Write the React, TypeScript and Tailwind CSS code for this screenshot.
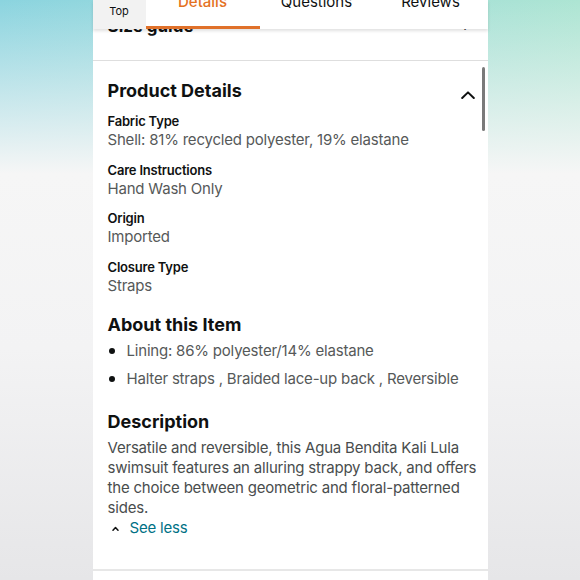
import React from "react";

const details = [
  { label: "Fabric Type", value: "Shell: 81% recycled polyester, 19% elastane" },
  { label: "Care Instructions", value: "Hand Wash Only" },
  { label: "Origin", value: "Imported" },
  { label: "Closure Type", value: "Straps" },
];

const bullets = [
  "Lining: 86% polyester/14% elastane",
  "Halter straps , Braided lace-up back , Reversible",
];

function ChevronUp({ className }: { className?: string }) {
  return (
    <svg viewBox="0 0 14 8" className={className} fill="none">
      <polyline points="1.2,7 7,1.4 12.8,7" stroke="#0f1111" strokeWidth="2" strokeLinecap="round" strokeLinejoin="round" />
    </svg>
  );
}

function App() {
  return (
    <div
      className="h-[580px] overflow-hidden flex justify-center bg-[linear-gradient(to_bottom,rgba(246,246,246,0)_0%,#f6f6f6_30%,#f3f3f4_60%,#e6e6e8_100%),linear-gradient(to_right,#8bd4df,#9fdcdb_50%,#ade5d3)]"
      style={{ fontFamily: "Inter, Roboto, Arial, sans-serif" }}
    >
      <div className="relative w-[395px] h-full bg-white">
        {/* sticky tab bar */}
        <div className="absolute top-0 left-0 right-0 z-10 h-[29px] flex bg-white shadow-[0_2px_3px_rgba(0,0,0,0.12)]">
          <div className="w-[53px] bg-[#f2f2f2] flex justify-center pt-[3px] text-[11px] text-[#0f1111]">Top</div>
          <div className="flex-1 relative flex justify-center">
            <span className="text-[15px] leading-none mt-[-6px] font-medium text-[#e4711e]">Details</span>
            <div className="absolute bottom-0 left-0 right-0 h-[3px] bg-[#e0712a]"></div>
          </div>
          <div className="flex-1 flex justify-center">
            <span className="text-[15px] leading-none mt-[-6px] text-[#0f1111]">Questions</span>
          </div>
          <div className="flex-1 flex justify-center">
            <span className="text-[15px] leading-none mt-[-6px] text-[#0f1111]">Reviews</span>
          </div>
        </div>

        {/* scrollbar */}
        <div className="absolute right-[3px] top-[67px] w-[3px] h-[64px] rounded-full bg-[#7a7a7a]"></div>

        {/* size guide row, mostly under the tab bar */}
        <div className="h-[61px] border-b border-[#dedede] px-[15px] pt-[15px] flex justify-between">
          <span className="text-[17px] leading-[22px] font-bold text-[#0f1111]">Size guide</span>
          <span className="text-[13px] leading-[22px] text-[#333] mr-[4px]">›</span>
        </div>

        <div className="pl-[15px] pr-[10px] tracking-[-0.2px]">
          <div className="flex justify-between items-center pt-[18px]">
            <h2 className="text-[18px] leading-[24px] font-bold tracking-normal text-[#0f1111]">Product Details</h2>
            <ChevronUp className="w-[14px] h-[8px] mr-[3px] mt-[8px]" />
          </div>

          <div className="mt-[10px]">
            {details.map((d, i) => (
              <div key={d.label} className={i > 0 ? "mt-[11.5px]" : ""}>
                <div className="text-[13px] leading-[17px] font-semibold text-[#0f1111]">{d.label}</div>
                <div className="text-[15px] leading-[20px] text-[#565959]">{d.value}</div>
              </div>
            ))}
          </div>

          <h2 className="mt-[17px] text-[18px] leading-[24px] font-bold tracking-normal text-[#0f1111]">About this Item</h2>
          <ul className="mt-[4px]">
            {bullets.map((b, i) => (
              <li key={b} className={`flex items-center text-[15px] leading-[20px] text-[#565959] ${i > 0 ? "mt-[8.5px]" : ""}`}>
                <span className="w-[6px] h-[6px] rounded-full bg-[#0f1111] ml-[1px] mr-[12px]"></span>
                {b}
              </li>
            ))}
          </ul>

          <h2 className="mt-[21px] text-[18px] leading-[24px] font-bold tracking-normal text-[#0f1111]">Description</h2>
          <p className="mt-[4px] w-[372px] text-[15px] leading-[20px] text-[#494d4d]">
            Versatile and reversible, this Agua Bendita Kali Lula swimsuit features an alluring strappy back, and offers the choice between geometric and floral-patterned sides.
          </p>
          <div className="flex items-center text-[15px] leading-[20px] text-[#007185]">
            <svg viewBox="0 0 8 6" className="w-[7px] h-[5px] ml-[4px] mr-[11px]" fill="none">
              <polyline points="1,5 4,1.8 7,5" stroke="#0f1111" strokeWidth="1.8" strokeLinecap="round" strokeLinejoin="round" />
            </svg>
            See less
          </div>
        </div>

        <div className="mt-[31px] border-t-2 border-[#e7e7e7]"></div>
      </div>
    </div>
  );
}

export default App;
